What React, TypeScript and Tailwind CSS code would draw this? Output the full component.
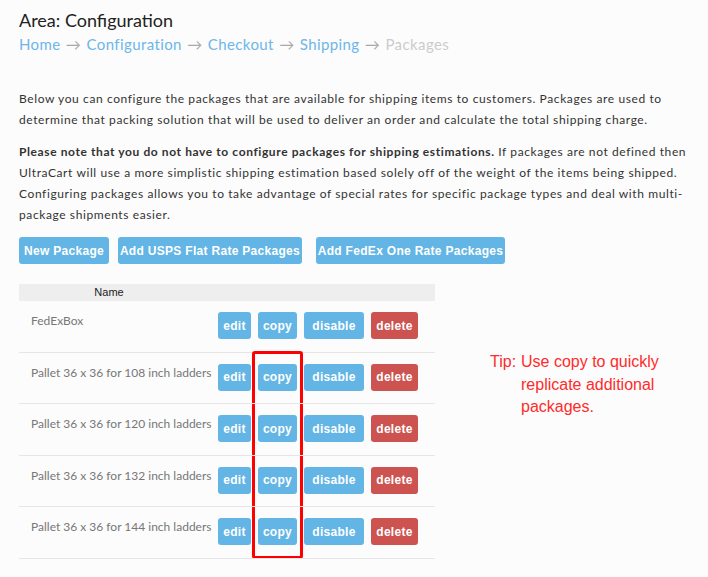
const rows = [
  "FedExBox",
  "Pallet 36 x 36 for 108 inch ladders",
  "Pallet 36 x 36 for 120 inch ladders",
  "Pallet 36 x 36 for 132 inch ladders",
  "Pallet 36 x 36 for 144 inch ladders",
];

const crumbs = ["Home", "Configuration", "Checkout", "Shipping"];

function Btn({ label, w, red }: { label: string; w: string; red?: boolean }) {
  return (
    <span
      className={`${w} h-[27px] flex items-center justify-center whitespace-nowrap rounded-[3px] text-white text-[12px] font-bold tracking-[0.3px] font-['Liberation_Sans',Arial,sans-serif] ${
        red ? "bg-[#cd5350]" : "bg-[#62b5e5]"
      }`}
    >
      {label}
    </span>
  );
}

export default function App() {
  return (
    <div className="min-h-[577px] bg-[#fcfcfc] pl-[19px] pt-[8px] font-['Lato',sans-serif]">
      <h1 className="text-[18px] leading-[24px] text-[#222]">Area: Configuration</h1>
      <div className="text-[15px] leading-[24px] tracking-[0.4px] whitespace-nowrap">
        {crumbs.map((c) => (
          <span key={c}>
            <span className="text-[#6db6ea]">{c}</span>
            <span className="text-[#aaa] mx-[1px]"> → </span>
          </span>
        ))}
        <span className="text-[#ccc]">Packages</span>
      </div>

      <div className="mt-[32px] w-[678px] text-[12px] leading-[21px] tracking-[0.6px] text-[#333]">
        <p>
          Below you can configure the packages that are available for shipping items to customers. Packages are used to
          determine that packing solution that will be used to deliver an order and calculate the total shipping charge.
        </p>
        <p className="mt-[11px]">
          <b>Please note that you do not have to configure packages for shipping estimations.</b> If packages are not
          defined then UltraCart will use a more simplistic shipping estimation based solely off of the weight of the
          items being shipped. Configuring packages allows you to take advantage of special rates for specific package
          types and deal with multi-package shipments easier.
        </p>
      </div>

      <div className="flex mt-[12px]">
        <Btn label="New Package" w="w-[90px]" />
        <span className="ml-[9px]">
          <Btn label="Add USPS Flat Rate Packages" w="w-[184px]" />
        </span>
        <span className="ml-[14px]">
          <Btn label="Add FedEx One Rate Packages" w="w-[189px]" />
        </span>
      </div>

      <div className="flex mt-[20px]">
        <div className="w-[416px]">
          <div className="h-[17px] bg-[#eeeeee] flex items-center font-['Liberation_Sans',Arial,sans-serif] text-[11px] text-[#222]">
            <span className="w-[180px] text-center">Name</span>
          </div>
          {rows.map((r, i) => (
            <div key={r} className="relative h-[51.5px] border-b border-[#e6e6e6] flex items-start">
              <span className="w-[199px] pl-[12px] pt-[12px] text-[12px] text-[#777] leading-[16px]">{r}</span>
              <div className="flex gap-[7px] pt-[11px]">
                <Btn label="edit" w="w-[33px]" />
                <Btn label="copy" w="w-[39px]" />
                <Btn label="disable" w="w-[60px]" />
                <Btn label="delete" w="w-[47px]" red />
              </div>
              {i === 0 && (
                <div className="absolute left-[233px] top-[50px] w-[51px] h-[208px] border-[3px] border-[#ff0000] rounded-[3px]" />
              )}
            </div>
          ))}
        </div>
        <div className="ml-[55px] mt-[67px] flex text-[16px] leading-[22.5px] text-[#ff2b2b] font-['Liberation_Sans',Arial,sans-serif]">
          <span className="w-[31px]">Tip:</span>
          <span className="w-[142px]">Use copy to quickly replicate additional packages.</span>
        </div>
      </div>
    </div>
  );
}
